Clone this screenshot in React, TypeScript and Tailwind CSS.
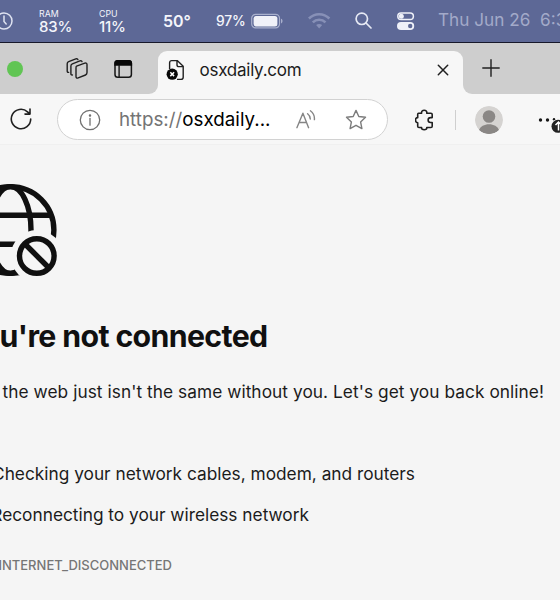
import React from "react";

function MenuBar() {
  return (
    <header className="flex h-[42px] w-full shrink-0 items-center overflow-hidden bg-[#5d6896] text-[#f4f5fb]">
      <div className="w-[39px] shrink-0">
        <svg className="block h-[42px] w-[20px]" viewBox="0 0 20 42" fill="none" stroke="#dfe3f1" strokeWidth="1.5" strokeLinecap="round">
          <circle cx="4" cy="21" r="8" />
          <path d="M4 16v5.5l2.2 2.5" />
        </svg>
      </div>
      <div className="flex w-[60px] shrink-0 flex-col pt-[1px]">
        <span className="text-[8.8px] leading-[10px]">RAM</span>
        <span className="text-[15px] leading-[15px] font-medium tracking-[-0.2px]">83%</span>
      </div>
      <div className="flex w-[64px] shrink-0 flex-col pt-[1px]">
        <span className="text-[8.8px] leading-[10px]">CPU</span>
        <span className="text-[15px] leading-[15px] font-medium tracking-[-0.2px]">11%</span>
      </div>
      <span className="w-[53px] shrink-0 text-[16px] font-semibold">50°</span>
      <span className="w-[35px] shrink-0 text-[13.8px] font-medium tracking-[-0.2px]">97%</span>
      <svg className="h-[16px] w-[57px] shrink-0" viewBox="0 0 57 16" fill="none">
        <rect x=".7" y="1.3" width="27.8" height="13.6" rx="4" stroke="#a9b0cd" strokeWidth="1.2" />
        <rect x="2.6" y="3" width="23.8" height="10.4" rx="2.5" fill="#f0f1f8" />
        <path d="M30 5.8c2 .5 2 4 0 4.600z" fill="#a9b0cd" />
      </svg>
      <svg className="h-[18px] w-[47px] shrink-0" viewBox="0 0 47 18" fill="none" stroke="#8790b7" strokeWidth="2.5">
        <path d="M.9 6.500C6.700 .7 15.600 .7 21.400 6.500" />
        <path d="M4.800 10.300c3.500-3.500 9.200-3.500 12.700 0" />
        <path d="M11.150 16.500l-3-3.400c1.700-1.600 4.300-1.600 6 0z" fill="#8790b7" stroke="none" />
      </svg>
      <svg className="h-[18px] w-[42px] shrink-0" viewBox="0 0 42 18" fill="none" stroke="#e6e9f4" strokeWidth="1.700" strokeLinecap="round">
        <circle cx="6.800" cy="6.800" r="5.700" />
        <path d="M11 11l5 5" />
      </svg>
      <svg className="h-[18px] w-[41px] shrink-0" viewBox="0 0 41 18" fill="none">
        <rect x=".8" y="1" width="15.600" height="6.600" rx="3.300" stroke="#eef0f8" strokeWidth="1.500" />
        <circle cx="4.300" cy="4.300" r="2.500" fill="#eef0f8" />
        <rect x="0" y="10" width="17.200" height="8" rx="4" fill="#eef0f8" />
        <circle cx="13.200" cy="14" r="2.200" fill="#5d6896" />
      </svg>
      <span className="shrink-0 whitespace-pre pb-[2px] text-[17.2px] text-[#a3aac9]">Thu Jun 26  6:35</span>
    </header>
  );
}

function TabStrip() {
  return (
    <div className="flex h-[52px] w-full shrink-0 overflow-hidden border-t border-[#17182a] bg-[#cecece]">
      <div className="flex h-[51px] w-[149px] shrink-0 items-center">
        <div className="ml-[7px] h-[16px] w-[16px] shrink-0 rounded-full bg-[#61c554]" />
        <svg className="ml-[43px] h-[24px] w-[24px] shrink-0" viewBox="0 0 24 24" fill="none" stroke="#202020" strokeWidth="1.400" strokeLinejoin="round" strokeLinecap="round">
          <path d="M10.600 9.200l8.200-3c1.400-.5 2.200.1 2.200 1.400v8c0 1.200-.5 2-1.500 2.400l-7.300 2.900c-1.500.6-2.200 0-2.200-1.400v-8.200c0-1.100-.1-1.800.6-2.100z" />
          <path d="M6.400 18c-1 .2-1.500-.3-1.500-1.300V9c0-1.100.5-1.800 1.500-2.200l7.500-2.900c1.100-.4 1.900-.1 2.100.7" />
          <path d="M2.700 15.400c-1 .1-1.500-.4-1.500-1.300V6.800c0-1.100.5-1.800 1.500-2.200l7.100-2.700c1.100-.4 1.900-.1 2.100.7" />
        </svg>
        <svg className="ml-[23px] h-[20px] w-[20px] shrink-0" viewBox="0 0 20 20" fill="none">
          <rect x="2" y="1.700" width="16.400" height="16.600" rx="2.800" stroke="#161616" strokeWidth="1.500" />
          <path d="M1.300 6.700V4c0-2 1.300-3 3-3h11.800c1.700 0 3 1 3 3v2.700z" fill="#080808" />
          <path d="M6.100 6v12" stroke="#161616" strokeWidth="1.400" />
        </svg>
      </div>
      <div className="flex h-[51px] w-[9px] shrink-0 items-end bg-[#f7f7f7]">
        <div className="h-full w-full rounded-br-[9px] bg-[#cecece]" />
      </div>
      <div className="mt-[8px] flex h-[43px] w-[305px] shrink-0 items-center rounded-t-[9px] bg-[#f7f7f7] pb-[6px]">
        <svg className="ml-[7px] h-[22px] w-[22px] shrink-0" viewBox="0 0 22 22" fill="none">
          <path d="M4.600 10V3.700c0-1.300.8-2.100 2.100-2.100h5.500l6 5.600v11.100c0 1.300-.8 2.100-2.100 2.100H12M12 1.700v4c0 1.300.6 1.900 1.900 1.900h4.200" stroke="#202020" strokeWidth="1.400" strokeLinejoin="round" />
          <circle cx="7.200" cy="15.200" r="5.600" fill="#080808" />
          <path d="M5.300 13.300l3.800 3.800m0-3.800l-3.800 3.800" stroke="#fff" strokeWidth="1.500" />
        </svg>
        <span className="ml-[12.500px] w-[237.500px] shrink-0 pt-[2px] text-[17px] tracking-[-0.25px] text-[#1c1c1c]">osxdaily.com</span>
        <svg className="h-[12px] w-[12px] shrink-0" viewBox="0 0 12 12" stroke="#202020" strokeWidth="1.500" strokeLinecap="round">
          <path d="M1.300 1.300l9.400 9.400m0-9.400l-9.400 9.400" />
        </svg>
      </div>
      <div className="flex h-[51px] w-[9px] shrink-0 bg-[#f7f7f7]">
        <div className="h-full w-full rounded-bl-[9px] bg-[#cecece]" />
      </div>
      <svg className="mt-[16px] ml-[9.500px] h-[18px] w-[18px] shrink-0" viewBox="0 0 18 18" stroke="#202020" strokeWidth="1.400" strokeLinecap="round">
        <path d="M9 .8v16.400M.8 9h16.400" />
      </svg>
    </div>
  );
}

function Toolbar() {
  return (
    <div className="flex h-[51px] w-full shrink-0 items-center overflow-hidden border-b border-[#f0f0f0] bg-[#f7f7f7] pt-[1px]">
      <svg className="mb-[2px] ml-[10px] h-[22px] w-[22px] shrink-0" viewBox="0 0 22 22" fill="none" stroke="#202020" strokeWidth="1.600" strokeLinecap="round" strokeLinejoin="round">
        <path d="M20.700 11a9.700 9.700 0 1 1-3.200-7.200l2.100 1.900M20 1.100v5h-5" />
      </svg>
      <div className="ml-[25px] flex h-[41px] w-[331px] shrink-0 items-center rounded-full border border-[#d2d2d2] bg-white">
        <svg className="ml-[21px] h-[22px] w-[22px] shrink-0" viewBox="0 0 22 22" fill="none" stroke="#707070" strokeWidth="1.300">
          <circle cx="11" cy="11" r="9.700" />
          <path d="M11 9.500v6.700" strokeLinecap="round" />
          <circle cx="11" cy="6.600" r=".6" fill="#707070" />
        </svg>
        <div className="ml-[18px] w-[177px] shrink-0 whitespace-nowrap pt-[2px] text-[18.800px] text-black">
          <span className="text-[#747474]">https://</span>osxdaily...
        </div>
        <svg className="h-[22px] w-[49px] shrink-0" viewBox="0 0 49 22" fill="none" stroke="#858585" strokeWidth="1.400" strokeLinecap="round" strokeLinejoin="round">
          <path d="M.9 18.700L6.900 4.200l5.700 14.500M3.100 13.500h7.500M11.600 4.800c1.700 1.300 2.700 3 2.700 5.200M14.400 1.800c2.900 2.100 4.300 5 4 8.800" />
        </svg>
        <svg className="h-[22px] w-[22px] shrink-0" viewBox="0 0 22 22" fill="none" stroke="#7c7c7c" strokeWidth="1.400" strokeLinejoin="round">
          <path d="M11 1.400l2.800 6.100 6.700.8-4.900 4.600 1.300 6.700-5.900-3.300-5.900 3.300 1.300-6.700-4.900-4.600 6.700-.8z" />
        </svg>
      </div>
      <svg className="ml-[27px] h-[22px] w-[20px] shrink-0" viewBox="0 0 20 22" fill="none" stroke="#202020" strokeWidth="1.600" strokeLinejoin="round">
        <path d="M3.500 4.200h3.100C6.300 2.300 7.500 1.200 9.200 1.200s2.900 1.100 2.600 3h4.100c.8 0 1.300.5 1.300 1.300v3.100h-1.600c-3.300 0-3.300 4.900 0 4.900h1.600v3.700c0 .8-.5 1.300-1.300 1.300h-4.100c.2 1.400-.8 2.300-2.600 2.300s-2.900-.9-2.600-2.300H4c-.8 0-1.300-.5-1.300-1.300v-3.500C-.2 13.500-.2 8.400 2.700 8.600V5.500c0-.7.2-1.300.8-1.300z" />
      </svg>
      <div className="ml-[20px] h-[20px] w-px shrink-0 bg-[#cfcfcf]" />
      <svg className="ml-[19px] h-[28px] w-[28px] shrink-0 rounded-full" viewBox="0 0 28 28">
        <circle cx="14" cy="14" r="14" fill="#d5d3d1" />
        <circle cx="14" cy="10.500" r="6.300" fill="#8a8785" />
        <path d="M3.800 24.500c2.500-8.500 17.900-8.500 20.400 0C18.500 29.300 9.500 29.300 3.800 24.500z" fill="#8a8785" />
      </svg>
      <svg className="ml-[34px] h-[26px] w-[23px] shrink-0" viewBox="0 0 23 26">
        <circle cx="3.500" cy="13" r="1.700" fill="#171717" />
        <circle cx="10.500" cy="13" r="1.700" fill="#171717" />
        <circle cx="17" cy="12.300" r="1.200" fill="#171717" />
        <circle cx="21" cy="19.300" r="7" fill="#f7f7f7" />
        <circle cx="21" cy="19.300" r="6.500" fill="#222" />
        <path d="M21.500 23.500v-8M18.500 18l3-3 3 3" fill="none" stroke="#fff" strokeWidth="1.500" />
      </svg>
    </div>
  );
}

function OfflineGlobe() {
  return (
    <svg className="mt-[35px] block h-[100px] w-[62px] shrink-0" viewBox="0 180 62 100" fill="none" stroke="#101010" strokeWidth="5.400">
      <defs>
        <mask id="badge-gap" maskUnits="userSpaceOnUse" x="-40" y="180" width="110" height="100">
          <rect x="-40" y="180" width="110" height="100" fill="white" stroke="none" />
          <circle cx="36.800" cy="256" r="26" fill="black" stroke="none" />
        </mask>
      </defs>
      <g mask="url(#badge-gap)">
        <circle cx="10.500" cy="230" r="43.400" />
        <ellipse cx="10.500" cy="230" rx="20.500" ry="43.400" />
        <path d="M-30 215.300h80M-30 244.200h80" />
      </g>
      <circle cx="36.800" cy="256" r="17.300" />
      <path d="M25 244l24 24" />
    </svg>
  );
}

function ErrorPage() {
  return (
    <main className="flex w-full flex-1 flex-col overflow-hidden bg-[#f5f5f5] text-[#1b1b1b]">
      <OfflineGlobe />
      <h1 className="mt-[37px] flex h-[40px] w-[267.500px] shrink-0 items-center justify-end whitespace-nowrap text-[30.300px] font-bold tracking-[-0.65px] text-[#101010]">
        You're not connected
      </h1>
      <p className="mt-[23px] flex h-[24px] w-[544px] shrink-0 items-center justify-end whitespace-nowrap text-[17.300px] tracking-[0.055px]">
        And the web just isn't the same without you. Let's get you back online!
      </p>
      <ul className="mt-[58px] flex shrink-0 flex-col gap-[17px] text-[17.300px]">
        <li className="flex h-[24px] w-[415px] items-center justify-end whitespace-nowrap">Checking your network cables, modem, and routers</li>
        <li className="flex h-[24px] w-[309px] items-center justify-end whitespace-nowrap">Reconnecting to your wireless network</li>
      </ul>
      <p className="mt-[29px] flex h-[20px] w-[172px] shrink-0 items-center justify-end whitespace-nowrap text-[13px] font-medium text-[#767676]">
        ERR_INTERNET_DISCONNECTED
      </p>
    </main>
  );
}

export default function App() {
  return (
    <div className="flex h-[600px] w-[560px] flex-col overflow-hidden bg-[#f5f5f5] font-['Inter',sans-serif]">
      <MenuBar />
      <TabStrip />
      <Toolbar />
      <ErrorPage />
    </div>
  );
}
